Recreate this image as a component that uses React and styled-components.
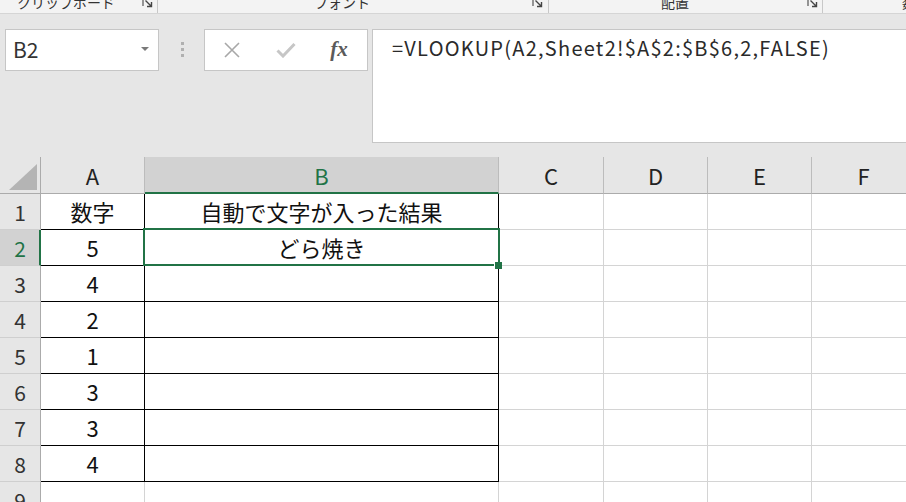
import React from "react";
import styled, { createGlobalStyle } from "styled-components";

const GREEN = "#217346";
const FONT = `"Noto Sans CJK JP", "Noto Sans", sans-serif`;

const Global = createGlobalStyle`
  html, body { margin: 0; padding: 0; background: #e6e6e6; overflow: hidden; }
  * { box-sizing: border-box; }
  body { font-family: ${FONT}; }
`;

const Page = styled.div`
  width: 906px;
  height: 502px;
  overflow: hidden;
  display: flex;
  flex-direction: column;
  background: #e6e6e6;
`;

/* ---------- ribbon strip ---------- */
const Ribbon = styled.div`
  height: 14px;
  flex: none;
  background: #f3f3f3;
  border-bottom: 1px solid #d5d5d5;
  display: grid;
  grid-template-columns: 158px 391px 274px 1fr;
  overflow: hidden;
`;

const Group = styled.div`
  height: 13px;
  display: flex;
  align-items: flex-start;
  border-right: ${(p) => (p.$last ? "none" : "1px solid #c8c8c8")};
  overflow: hidden;
`;

const GroupLabel = styled.div`
  flex: 1;
  margin-top: -5px;
  font-size: 14px;
  line-height: 14px;
  color: #333;
  white-space: nowrap;
  text-align: ${(p) => p.$align || "center"};
  padding-right: ${(p) => p.$pr || 0}px;
  padding-left: ${(p) => p.$pl || 0}px;
`;

const Launcher = styled.svg`
  width: 11px;
  height: 11px;
  margin-top: -3px;
  margin-right: ${(p) => p.$mr || 4}px;
  flex: none;
`;

const LauncherIcon = ({ mr }) => (
  <Launcher $mr={mr} viewBox="0 0 11 11">
    <path d="M1 9V1h8" fill="none" stroke="#555" strokeWidth="1.2" />
    <path d="M3.5 3.5l5.5 5.5M9.5 5v4.5H5" fill="none" stroke="#444" strokeWidth="1.4" />
  </Launcher>
);

/* ---------- formula row ---------- */
const FormulaArea = styled.div`
  flex: none;
  height: 143px;
  display: flex;
  align-items: flex-start;
  padding: 15px 0 14px 5px;
`;

const NameBox = styled.div`
  width: 154px;
  height: 42px;
  flex: none;
  background: #fff;
  border: 1px solid #c6c6c6;
  display: flex;
  align-items: center;
  padding: 0 0 1px 7px;
`;

const NameText = styled.span`
  font-size: 21px;
  color: #333;
  flex: 1;
  line-height: 1;
`;

const Caret = styled.span`
  width: 0;
  height: 0;
  border-left: 4px solid transparent;
  border-right: 4px solid transparent;
  border-top: 4px solid #7a7a7a;
  margin-right: 9px;
  margin-top: -2px;
`;

const Grip = styled.div`
  width: 45px;
  height: 42px;
  flex: none;
  display: flex;
  flex-direction: column;
  align-items: center;
  justify-content: center;
  gap: 3px;
  padding-left: 1px;
  padding-bottom: 1px;
`;

const GripDot = styled.span`
  width: 3px;
  height: 3px;
  background: #b0b0b0;
`;

const ButtonBox = styled.div`
  width: 164px;
  height: 42px;
  flex: none;
  background: #fff;
  border: 1px solid #c6c6c6;
  display: grid;
  grid-template-columns: 54px 54px 1fr;
  align-items: center;
  justify-items: center;
  margin-right: 4px;
`;

const Fx = styled.span`
  font-family: "Liberation Serif", "DejaVu Serif", serif;
  font-style: italic;
  font-weight: bold;
  font-size: 21px;
  color: #5a5a5a;
  line-height: 1;
  margin-top: -2px;
  margin-left: -2px;
`;

const FormulaBar = styled.div`
  flex: 1;
  height: 114px;
  margin-right: -1px;
  background: #fff;
  border: 1px solid #c6c6c6;
  padding: 6px 0 0 19px;
  font-size: 20px;
  line-height: 24px;
  letter-spacing: 1.25px;
  color: #2a2a2a;
  white-space: nowrap;
`;

/* ---------- sheet ---------- */
const Sheet = styled.div`
  position: relative;
  flex: 1;
  background: #fff;
  overflow: hidden;
`;

const Row = styled.div`
  display: flex;
  height: ${(p) => p.$h}px;
  flex: none;
`;

const Corner = styled.div`
  width: 41px;
  flex: none;
  height: 100%;
  background: #e6e6e6;
  border-right: 1px solid #ababab;
  border-bottom: 1px solid #ababab;
  display: flex;
  align-items: flex-end;
  justify-content: flex-end;
  padding: 0 3px 3px 0;
`;

const ColHeader = styled.div`
  width: ${(p) => p.$w}px;
  flex: none;
  height: 100%;
  background: ${(p) => (p.$sel ? "#d2d2d2" : "#e6e6e6")};
  color: ${(p) => (p.$sel ? GREEN : "#222")};
  border-right: 1px solid #bcbcbc;
  border-bottom: ${(p) => (p.$sel ? `2px solid ${GREEN}` : "1px solid #ababab")};
  display: flex;
  align-items: center;
  justify-content: center;
  font-size: 22px;
  padding-top: ${(p) => (p.$sel ? 1 : 0)}px;
`;

const RowHeader = styled.div`
  width: 41px;
  flex: none;
  height: 100%;
  background: ${(p) => (p.$sel ? "#d2d2d2" : "#e6e6e6")};
  color: ${(p) => (p.$sel ? GREEN : "#333")};
  border-right: ${(p) => (p.$sel ? `2px solid ${GREEN}` : "1px solid #ababab")};
  border-bottom: 1px solid #cfcfcf;
  display: flex;
  align-items: center;
  justify-content: center;
  font-size: 21px;
  padding-left: ${(p) => (p.$sel ? 1 : 0)}px;
`;

const Cell = styled.div`
  width: ${(p) => p.$w}px;
  flex: none;
  height: 100%;
  border-right: 1px solid ${(p) => (p.$boxed ? "#000" : "#d4d4d4")};
  border-bottom: 1px solid ${(p) => (p.$boxed ? "#000" : "#d4d4d4")};
  display: flex;
  align-items: center;
  justify-content: center;
  font-size: 22px;
  color: #111;
  white-space: nowrap;
  padding-bottom: 1px;
`;

const Selection = styled.div`
  position: absolute;
  left: 143px;
  top: 71px;
  width: 357px;
  height: 38px;
  border: 2px solid ${GREEN};
  pointer-events: none;
`;

const FillHandle = styled.div`
  position: absolute;
  right: -4px;
  bottom: -5px;
  width: 7px;
  height: 7px;
  background: ${GREEN};
  box-shadow: -1px 0 0 #fff;
`;

const COLS = [
  { id: "A", w: 104 },
  { id: "B", w: 354 },
  { id: "C", w: 105 },
  { id: "D", w: 104 },
  { id: "E", w: 104 },
  { id: "F", w: 104 },
];

const DATA = [
  ["数字", "自動で文字が入った結果"],
  ["5", "どら焼き"],
  ["4", ""],
  ["2", ""],
  ["1", ""],
  ["3", ""],
  ["3", ""],
  ["4", ""],
  ["", ""],
];

export default function App() {
  return (
    <Page>
      <Global />
      <Ribbon>
        <Group>
          <GroupLabel $pr={10}>クリップボード</GroupLabel>
          <LauncherIcon mr={4} />
        </Group>
        <Group>
          <GroupLabel $pr={6}>フォント</GroupLabel>
          <LauncherIcon mr={5} />
        </Group>
        <Group>
          <GroupLabel $pr={6}>配置</GroupLabel>
          <LauncherIcon mr={4} />
        </Group>
        <Group $last>
          <GroupLabel $align="left" $pl={79}>数値</GroupLabel>
        </Group>
      </Ribbon>

      <FormulaArea>
        <NameBox>
          <NameText>B2</NameText>
          <Caret />
        </NameBox>
        <Grip>
          <GripDot />
          <GripDot />
          <GripDot />
        </Grip>
        <ButtonBox>
          <svg width="18" height="16" viewBox="0 0 18 16">
            <path d="M2 1l14 14M16 1L2 15" stroke="#a8a8a8" strokeWidth="1.6" fill="none" />
          </svg>
          <svg width="20" height="16" viewBox="0 0 20 16">
            <path d="M1.5 8.5l5.5 5.5L18.5 2" stroke="#c6c6c6" strokeWidth="3" fill="none" />
          </svg>
          <Fx>fx</Fx>
        </ButtonBox>
        <FormulaBar>=VLOOKUP(A2,Sheet2!$A$2:$B$6,2,FALSE)</FormulaBar>
      </FormulaArea>

      <Sheet>
        <Row $h={37}>
          <Corner>
            <svg width="28" height="26" viewBox="0 0 28 26">
              <polygon points="28,0 28,26 0,26" fill="#b4b4b4" />
            </svg>
          </Corner>
          {COLS.map((c) => (
            <ColHeader key={c.id} $w={c.w} $sel={c.id === "B"}>
              {c.id}
            </ColHeader>
          ))}
        </Row>
        {DATA.map((r, i) => (
          <Row key={i} $h={36}>
            <RowHeader $sel={i === 1}>{i + 1}</RowHeader>
            {COLS.map((c, j) => (
              <Cell key={c.id} $w={c.w} $boxed={j < 2 && i < 8}>
                {j < 2 ? r[j] : ""}
              </Cell>
            ))}
          </Row>
        ))}
        <Selection>
          <FillHandle />
        </Selection>
      </Sheet>
    </Page>
  );
}
